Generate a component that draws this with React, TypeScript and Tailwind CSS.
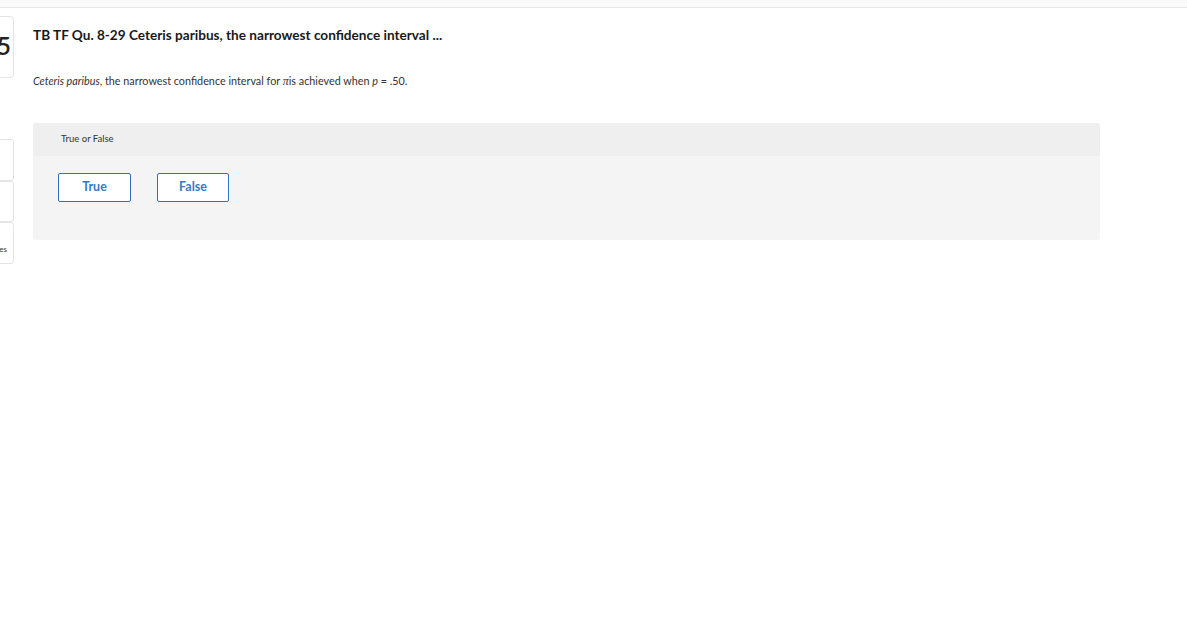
export default function App() {
  return (
    <div className="w-full h-[631px] bg-white overflow-hidden font-['Lato','Open_Sans',sans-serif] text-[#1a1a1a]">
      {/* Top bar */}
      <div className="h-[8px] bg-[#fafafa] border-b border-[#e6e6e6]" />

      <div className="flex">
        {/* Sidebar (cut off at left edge) */}
        <div className="w-[15px] shrink-0 overflow-hidden">
          <div className="w-[60px] ml-[-46px]">
            <div className="mt-[8px] h-[62px] bg-white border border-[#e4e4e4] rounded-[4px] flex items-center justify-end pr-[2px] pb-[4px] leading-none">
              <span className="text-[25px] font-semibold text-[#222]">5</span>
            </div>
            <div className="mt-[61px] h-[42px] bg-white border border-[#e4e4e4] rounded-[3px]" />
            <div className="h-[41px] bg-white border border-[#e4e4e4] rounded-[3px]" />
            <div className="h-[42px] bg-white border border-[#e4e4e4] rounded-[3px] flex items-end justify-end pr-[6px] pb-[10px]">
              <span className="text-[8px] text-[#333] leading-none">References</span>
            </div>
          </div>
        </div>

        {/* Main content */}
        <div className="flex-1 pl-[18px]">
          <h1 className="mt-[19px] text-[13.6px] font-bold leading-[16px] text-[#1a1a1a]">
            TB TF Qu. 8-29 Ceteris paribus, the narrowest confidence interval ...
          </h1>
          <p className="mt-[32px] text-[10.8px] leading-[12px] text-[#333]">
            <i>Ceteris paribus</i>, the narrowest confidence interval for <i className="font-['Liberation_Serif',serif] text-[12px]">π</i>is achieved when <i>p</i> = .50.
          </p>

          <div className="mt-[36px] w-[1067px] rounded-[3px] overflow-hidden bg-[#f4f4f4]">
            <div className="h-[33px] bg-[#efefef] flex items-center pl-[28px]">
              <span className="text-[9.5px] text-[#333]">True or False</span>
            </div>
            <div className="flex gap-[26px] pl-[25px] pt-[17px] pb-[38px]">
              <button className="w-[73px] h-[29px] bg-white border border-[#2f72c2] rounded-[2px] text-[12.5px] font-bold text-[#3a78c4]">
                True
              </button>
              <button className="w-[72px] h-[29px] bg-white border border-[#2f72c2] rounded-[2px] text-[12.5px] font-bold text-[#3a78c4]">
                False
              </button>
            </div>
          </div>
        </div>
      </div>
    </div>
  )
}
